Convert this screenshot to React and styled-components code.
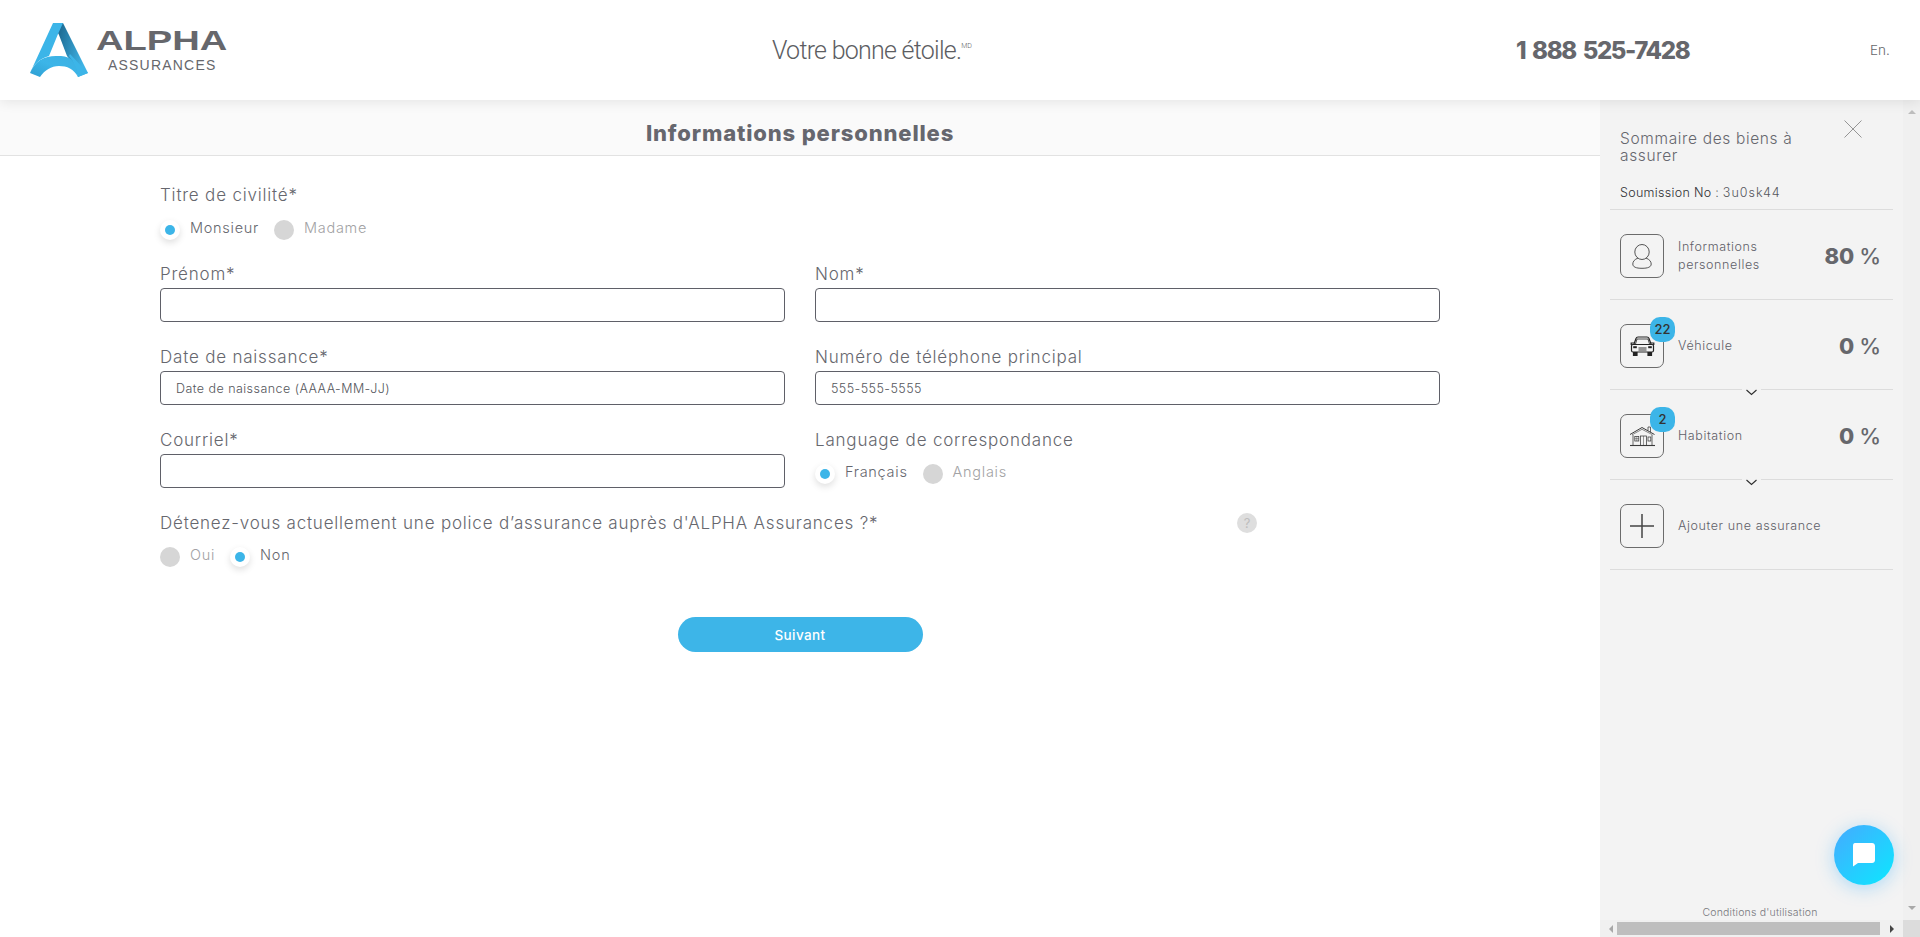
import React from "react";
import styled, { createGlobalStyle } from "styled-components";

const GlobalStyle = createGlobalStyle`
  html, body {
    margin: 0;
    padding: 0;
    height: 100%;
    overflow: hidden;
    background: #fff;
    font-family: Inter, "Liberation Sans", sans-serif;
    color: #66676e;
  }
  * { box-sizing: border-box; }
`;

const Page = styled.div`
  width: 1920px;
  height: 937px;
  display: flex;
  flex-direction: column;
`;

/* header */
const Header = styled.header`
  position: relative;
  z-index: 2;
  height: 100px;
  flex: none;
  background: #fff;
  box-shadow: 0 2px 12px rgba(0, 0, 0, 0.09);
  display: grid;
  grid-template-columns: 772px 744px 354px 1fr;
  align-items: center;
`;
const LogoWrap = styled.div`
  display: flex;
  align-items: flex-start;
  padding-left: 30px;
  height: 54px;
  gap: 8px;
`;
const LogoText = styled.div`
  padding-top: 5px;
  width: 132px;
`;
const LogoName = styled.div`
  font-family: "Liberation Sans", sans-serif;
  font-weight: 700;
  font-size: 28px;
  line-height: 26px;
  color: #66676c;
  transform: scaleX(1.36);
  transform-origin: left center;
  white-space: nowrap;
`;
const LogoSub = styled.div`
  font-family: "Liberation Sans", sans-serif;
  font-size: 14px;
  line-height: 16px;
  letter-spacing: 1.2px;
  color: #66676c;
  margin: 3px 0 0 12px;
  white-space: nowrap;
`;
const Tagline = styled.div`
  font-family: Roboto, sans-serif;
  font-weight: 300;
  font-size: 25px;
  letter-spacing: -0.75px;
  color: #5c5d62;
  white-space: nowrap;
  sup {
    font-size: 7px;
    letter-spacing: 0;
    vertical-align: 11px;
    line-height: 0;
  }
`;
const Phone = styled.div`
  font-weight: 800;
  font-size: 24px;
  letter-spacing: -1.38px;
  word-spacing: 3px;
  color: #66676c;
  white-space: nowrap;
`;
const Lang = styled.div`
  font-size: 13.5px;
  font-weight: 300;
  color: #66676c;
`;

/* body */
const Body = styled.div`
  flex: 1;
  display: flex;
  min-height: 0;
`;
const Content = styled.main`
  flex: 1;
  min-width: 0;
`;
const TitleBar = styled.div`
  height: 56px;
  background: #fafafa;
  border-bottom: 1px solid #e2e2e2;
  display: flex;
  align-items: center;
  justify-content: center;
  padding-top: 10px;
`;
const PageTitle = styled.h1`
  margin: 0;
  font-size: 22px;
  font-weight: 800;
  letter-spacing: 0.85px;
  color: #66676e;
`;
const Form = styled.form`
  width: 1280px;
  margin-left: 160px;
  padding-top: 29px;
`;
const FieldLabel = styled.div`
  font-size: 17px;
  font-weight: 300;
  letter-spacing: 0.8px;
  line-height: 20px;
  color: #66676e;
  white-space: nowrap;
`;
const Grid = styled.div`
  display: grid;
  grid-template-columns: 625px 625px;
  column-gap: 30px;
  row-gap: 25px;
  margin-top: 24px;
`;
const Field = styled.div`
  display: flex;
  flex-direction: column;
  gap: 4px;
`;
const TextInput = styled.input`
  display: block;
  width: 100%;
  height: 34px;
  border: 1px solid #5f6068;
  border-radius: 4px;
  background: #fff;
  padding: 0 15px;
  font-family: inherit;
  font-size: 12.5px;
  font-weight: 300;
  letter-spacing: 0.45px;
  color: #55565c;
  outline: none;
  &::placeholder {
    color: #55565c;
    opacity: 1;
  }
`;
const RadioRow = styled.div`
  display: flex;
  align-items: flex-start;
  gap: 15px;
  margin-top: ${({ $top }) => $top}px;
`;
const RadioItem = styled.label`
  display: flex;
  align-items: flex-start;
  gap: 10px;
`;
const RadioMark = styled.span`
  position: relative;
  width: 20px;
  height: 20px;
  border-radius: 50%;
  background: ${({ $on }) => ($on ? "#fff" : "#d6d6d6")};
  box-shadow: ${({ $on }) => ($on ? "0 3px 7px rgba(0, 0, 0, 0.13)" : "none")};
  display: flex;
  align-items: center;
  justify-content: center;
  &::after {
    content: "";
    display: ${({ $on }) => ($on ? "block" : "none")};
    width: 10px;
    height: 10px;
    border-radius: 50%;
    background: #3cb5e8;
  }
`;
const RadioText = styled.span`
  font-size: 14.5px;
  font-weight: 300;
  letter-spacing: 0.72px;
  line-height: 15px;
  color: ${({ $on }) => ($on ? "#66676e" : "#a2a2a4")};
`;
const QuestionRow = styled.div`
  width: 1097px;
  margin-top: 25px;
  display: flex;
  justify-content: space-between;
  align-items: center;
`;
const HelpDot = styled.span`
  width: 20px;
  height: 20px;
  border-radius: 50%;
  background: #dedede;
  color: #bdbdbd;
  font-size: 13px;
  line-height: 20px;
  text-align: center;
`;
const NextButton = styled.button`
  display: block;
  width: 245px;
  height: 35px;
  margin: 50px auto 0;
  border: 0;
  border-radius: 18px;
  background: #3db5e8;
  color: #fff;
  font-family: inherit;
  font-size: 13.5px;
  font-weight: 500;
  letter-spacing: 0.4px;
`;

/* summary panel */
const Aside = styled.aside`
  width: 320px;
  flex: none;
  display: grid;
  grid-template-columns: 303px 17px;
  grid-template-rows: 820px 17px;
`;
const Panel = styled.div`
  background: #f3f3f3;
  display: flex;
  flex-direction: column;
`;
const PanelHead = styled.div`
  display: flex;
  justify-content: space-between;
  align-items: flex-start;
  padding: 20px 41px 0 20px;
`;
const PanelTitle = styled.div`
  width: 190px;
  margin-top: 10px;
  font-size: 15.5px;
  font-weight: 300;
  letter-spacing: 0.65px;
  line-height: 17px;
  color: #66676e;
`;
const QuoteNo = styled.div`
  margin: 21px 0 0 20px;
  font-size: 12.5px;
  font-weight: 300;
  line-height: 16px;
  letter-spacing: 0.3px;
  color: #2f3034;
  span {
    letter-spacing: 1px;
    color: #55565c;
  }
`;
const Divider = styled.div`
  height: 1px;
  margin: ${({ $top }) => $top || 0}px 10px 0;
  display: flex;
  align-items: flex-start;
  &::before,
  &::after {
    content: "";
    flex: 1;
    height: 1px;
    background: #dcdcdc;
  }
  svg {
    flex: none;
  }
`;
const Row = styled.div`
  height: 89px;
  margin: 0 10px;
  padding: 24px 12px 0 10px;
  display: flex;
  align-items: flex-start;
`;
const IconBox = styled.div`
  position: relative;
  flex: none;
  width: 44px;
  height: 44px;
  border: 1px solid #6b6b6b;
  border-radius: 7px;
  display: flex;
  align-items: center;
  justify-content: center;
  color: #333;
`;
const Badge = styled.span`
  position: absolute;
  left: 29px;
  top: -8px;
  width: 25px;
  height: 25px;
  border-radius: 10px;
  background: #3cb5e8;
  color: #333;
  font-size: 13px;
  font-weight: 500;
  line-height: 25px;
  text-align: center;
`;
const RowLabel = styled.div`
  flex: 1;
  height: 44px;
  margin-left: 14px;
  display: flex;
  align-items: center;
  font-size: 12.5px;
  font-weight: 300;
  letter-spacing: 0.6px;
  line-height: 18px;
  color: #5f6068;
`;
const Percent = styled.div`
  height: 44px;
  line-height: 44px;
  font-size: 22px;
  font-weight: 800;
  color: #66676c;
  white-space: nowrap;
  span {
    font-weight: 500;
  }
`;
const Terms = styled.div`
  margin-top: auto;
  padding: 0 0 0 17px;
  text-align: center;
  font-size: 10.5px;
  font-weight: 300;
  letter-spacing: 0.2px;
  line-height: 14px;
  color: #77787d;
`;
const Track = styled.div`
  background: #f0f0f0;
  display: flex;
  flex-direction: ${({ $vertical }) => ($vertical ? "column" : "row")};
  align-items: center;
  justify-content: space-between;
  padding: ${({ $vertical }) => ($vertical ? "6px 0" : "0 5px")};
`;
const Thumb = styled.div`
  width: 263px;
  height: 13px;
  margin-right: 6px;
  background: #bebebe;
`;
const Corner = styled.div`
  background: #dcdcdc;
`;
const Arrow = styled.span`
  width: 0;
  height: 0;
  border: 4px solid transparent;
  ${({ $dir, $color }) => `border-${$dir}-color: ${$color};`}
  ${({ $dir }) => ($dir === "bottom" || $dir === "top" ? "border-width: 4px 4.5px;" : "")}
`;
const ChatButton = styled.button`
  position: fixed;
  left: 1834px;
  top: 825px;
  width: 60px;
  height: 60px;
  border: 0;
  border-radius: 50%;
  background: linear-gradient(135deg, #45aaff, #0ce8ff);
  box-shadow: 0 3px 18px rgba(40, 170, 255, 0.35);
  display: flex;
  align-items: center;
  justify-content: center;
  z-index: 3;
`;

const Logo = () => (
  <svg width="58" height="55" viewBox="0 0 58 55" style={{ flex: "none" }}>
    <defs>
      <linearGradient id="shade" x1="0" y1="0" x2="1" y2="0.35">
        <stop offset="0" stopColor="#15597f" />
        <stop offset="1" stopColor="#3fb4e6" />
      </linearGradient>
      <linearGradient id="band" x1="0" y1="1" x2="1" y2="0">
        <stop offset="0" stopColor="#2e9fd2" />
        <stop offset="0.5" stopColor="#3cb5e8" />
        <stop offset="1" stopColor="#3cb0e2" />
      </linearGradient>
    </defs>
    <path d="M23 0 L33 0 L58 50 L48 54 C47 50 45 43 37 33 L29 12 Z" fill="url(#shade)" />
    <path d="M23 0 L33 0 L28 11 L19 33 C9 36 3 42 0 50 Z" fill="#3cb5e8" />
    <path d="M0 50 C5 37 16 32 29 33 C40 33 46 37 48 54 C44 46 37 43 29 43 C21 43 15 47 10 54 Z" fill="url(#band)" />
    <path d="M58 50 L48 54 C47 46 44 39 39 33 L40 31 Z" fill="#3cb5e8" />
  </svg>
);

const CloseIcon = () => (
  <svg width="18" height="18" viewBox="0 0 18 18" fill="none" stroke="#8a8a8a" strokeWidth="0.9">
    <path d="M0.5 0.5 L17.5 17.5 M17.5 0.5 L0.5 17.5" />
  </svg>
);

const Chevron = () => (
  <svg width="19" height="7" viewBox="0 0 19 7" fill="none" stroke="#2e2e2e" strokeWidth="1.1">
    <path d="M4.5 1 L9.5 5.5 L14.5 1" />
  </svg>
);

const PersonIcon = () => (
  <svg width="20" height="25" viewBox="0 0 20 25" fill="none" stroke="#555" strokeWidth="1">
    <ellipse cx="10" cy="8" rx="7.2" ry="7.5" />
    <path d="M6 14 C2.5 15.5 0.8 17.5 0.8 20 C0.8 23 4 24.3 10 24.3 C16 24.3 19.2 23 19.2 20 C19.2 17.5 17.5 15.5 14 14" />
  </svg>
);

const CarIcon = () => (
  <svg width="25" height="21" viewBox="0 0 25 21" fill="none" stroke="#222" strokeWidth="1.2">
    <path d="M4 8 L6 2.5 C6.4 1.4 7 1 8 1 L17 1 C18 1 18.6 1.4 19 2.5 L21 8" />
    <path d="M5.5 8 L7 3 L18 3 L19.5 8" strokeWidth="0.8" />
    <path d="M4 7 L1.2 7 L1.2 8.6 L3 9 M21 7 L23.8 7 L23.8 8.6 L22 9" />
    <rect x="1.5" y="8.5" width="22" height="7.5" rx="1.5" fill="#f3f3f3" />
    <rect x="3.2" y="10.2" width="3.6" height="2" fill="#222" stroke="none" />
    <rect x="18.2" y="10.2" width="3.6" height="2" fill="#222" stroke="none" />
    <path d="M8.5 12 L16.5 12 M8.5 14 L16.5 14" strokeWidth="0.9" />
    <path d="M3.5 16 L3.5 19.5 L7 19.5 L7 16 M18 16 L18 19.5 L21.5 19.5 L21.5 16" fill="#222" />
  </svg>
);

const HouseIcon = () => (
  <svg width="27" height="21" viewBox="0 0 27 21" fill="none" stroke="#3a3a3a" strokeWidth="0.75">
    <path d="M1 8.5 L13 1.5 L25.5 8.5" strokeWidth="1" />
    <path d="M3 8.8 L13 3.3 L23.5 8.8" strokeWidth="0.6" />
    <path d="M19 4.5 L19 1 L21.5 1 L21.5 6" />
    <path d="M4 9 L4 19 M23 9 L23 19" />
    <path d="M1 19.5 L26 19.5" strokeWidth="1.1" />
    <rect x="5.8" y="10.5" width="4" height="4.5" />
    <path d="M7.8 10.5 L7.8 15 M5.8 12.7 L9.8 12.7" strokeWidth="0.5" />
    <rect x="11.5" y="10" width="6" height="9.5" />
    <path d="M14.5 10 L14.5 19.5" strokeWidth="0.5" />
    <rect x="19" y="11" width="2.8" height="4" />
  </svg>
);

const PlusIcon = () => (
  <svg width="26" height="26" viewBox="0 0 26 26" stroke="#444" strokeWidth="1.5">
    <path d="M13 1 L13 25 M1 13 L25 13" />
  </svg>
);

const ChatIcon = () => (
  <svg width="24" height="24" viewBox="0 0 24 24" fill="#fff">
    <path d="M3 0 L20 0 C21.7 0 23 1.3 23 3 L23 17 C23 18.7 21.7 20 20 20 L6 20 L1 23.5 L1 3 C1 1.3 1.7 0 3 0 Z" />
  </svg>
);

const Radio = ({ on, children }) => (
  <RadioItem>
    <RadioMark $on={on} />
    <RadioText $on={on}>{children}</RadioText>
  </RadioItem>
);

const summary = [
  { label: "Véhicule", percent: "0", badge: "22", icon: <CarIcon /> },
  { label: "Habitation", percent: "0", badge: "2", icon: <HouseIcon /> },
];

export default function App() {
  return (
    <Page>
      <GlobalStyle />
      <Header>
        <LogoWrap>
          <Logo />
          <LogoText>
            <LogoName>ALPHA</LogoName>
            <LogoSub>ASSURANCES</LogoSub>
          </LogoText>
        </LogoWrap>
        <Tagline>
          Votre bonne étoile.<sup>MD</sup>
        </Tagline>
        <Phone>1 888 525-7428</Phone>
        <Lang>En.</Lang>
      </Header>
      <Body>
        <Content>
          <TitleBar>
            <PageTitle>Informations personnelles</PageTitle>
          </TitleBar>
          <Form>
            <FieldLabel>Titre de civilité*</FieldLabel>
            <RadioRow $top={15}>
              <Radio on>Monsieur</Radio>
              <Radio>Madame</Radio>
            </RadioRow>
            <Grid>
              <Field>
                <FieldLabel>Prénom*</FieldLabel>
                <TextInput readOnly />
              </Field>
              <Field>
                <FieldLabel>Nom*</FieldLabel>
                <TextInput readOnly />
              </Field>
              <Field>
                <FieldLabel>Date de naissance*</FieldLabel>
                <TextInput readOnly placeholder="Date de naissance (AAAA-MM-JJ)" />
              </Field>
              <Field>
                <FieldLabel>Numéro de téléphone principal</FieldLabel>
                <TextInput readOnly placeholder="555-555-5555" />
              </Field>
              <Field>
                <FieldLabel>Courriel*</FieldLabel>
                <TextInput readOnly />
              </Field>
              <Field>
                <FieldLabel>Language de correspondance</FieldLabel>
                <RadioRow $top={10}>
                  <Radio on>Français</Radio>
                  <Radio>Anglais</Radio>
                </RadioRow>
              </Field>
            </Grid>
            <QuestionRow>
              <FieldLabel>Détenez-vous actuellement une police d’assurance auprès d'ALPHA Assurances ?*</FieldLabel>
              <HelpDot>?</HelpDot>
            </QuestionRow>
            <RadioRow $top={14}>
              <Radio>Oui</Radio>
              <Radio on>Non</Radio>
            </RadioRow>
            <NextButton type="button">Suivant</NextButton>
          </Form>
        </Content>
        <Aside>
          <Panel>
            <PanelHead>
              <PanelTitle>Sommaire des biens à assurer</PanelTitle>
              <CloseIcon />
            </PanelHead>
            <QuoteNo>
              Soumission No : <span>3u0sk44</span>
            </QuoteNo>
            <Divider $top={8} />
            <Row>
              <IconBox>
                <PersonIcon />
              </IconBox>
              <RowLabel>
                Informations
                <br />
                personnelles
              </RowLabel>
              <Percent>
                80 <span>%</span>
              </Percent>
            </Row>
            <Divider />
            {summary.map((item) => (
              <React.Fragment key={item.label}>
                <Row>
                  <IconBox>
                    {item.icon}
                    <Badge>{item.badge}</Badge>
                  </IconBox>
                  <RowLabel>{item.label}</RowLabel>
                  <Percent>
                    {item.percent} <span>%</span>
                  </Percent>
                </Row>
                <Divider>
                  <Chevron />
                </Divider>
              </React.Fragment>
            ))}
            <Row>
              <IconBox>
                <PlusIcon />
              </IconBox>
              <RowLabel>Ajouter une assurance</RowLabel>
            </Row>
            <Divider />
            <Terms>Conditions d'utilisation</Terms>
          </Panel>
          <Track $vertical>
            <Arrow $dir="bottom" $color="#bdbdbd" />
            <Arrow $dir="top" $color="#a8a8a8" />
          </Track>
          <Track>
            <Arrow $dir="right" $color="#a8a8a8" />
            <Thumb />
            <Arrow $dir="left" $color="#444" />
          </Track>
          <Corner />
        </Aside>
      </Body>
      <ChatButton type="button" aria-label="Clavardage">
        <ChatIcon />
      </ChatButton>
    </Page>
  );
}
